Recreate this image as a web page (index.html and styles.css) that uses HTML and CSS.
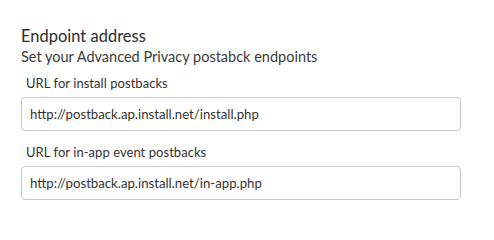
FILE: index.html
```html
<!DOCTYPE html>
<html>
<head>
<meta charset="utf-8">
<link rel="stylesheet" href="styles.css">
</head>
<body>
<section class="panel">
  <h2 class="title">Endpoint address</h2>
  <p class="subtitle">Set your Advanced Privacy postabck endpoints</p>
  <div class="field">
    <label class="label">URL for install postbacks</label>
    <div class="input">http://postback.ap.install.net/install.php</div>
  </div>
  <div class="field">
    <label class="label">URL for in-app event postbacks</label>
    <div class="input">http://postback.ap.install.net/in-app.php</div>
  </div>
</section>
</body>
</html>
```
FILE: styles.css
```css
html, body {
  margin: 0;
  padding: 0;
  background: #fff;
}
body {
  font-family: Lato, "Open Sans", sans-serif;
  color: #333;
}
.panel {
  padding: 26px 33px 0 21px;
  display: flex;
  flex-direction: column;
}
.title {
  margin: 0;
  font-size: 16.4px;
  font-weight: 400;
  line-height: 20px;
  color: #2b2b2b;
  letter-spacing: 0.05px;
}
.subtitle {
  margin: 2px 0 0;
  font-size: 14.5px;
  line-height: 18px;
  color: #3a3a3a;
}
.field {
  display: flex;
  flex-direction: column;
  margin-top: 8px;
}
.field + .field {
  margin-top: 12px;
}
.label {
  padding-left: 5px;
  font-size: 13px;
  line-height: 18px;
  color: #333;
  margin-bottom: 5px;
  letter-spacing: 0.05px;
}
.input {
  height: 32px;
  border: 1px solid #c8c8c8;
  border-radius: 4px;
  padding: 0 8px;
  display: flex;
  align-items: center;
  font-size: 13.2px;
  color: #333;
}
```
